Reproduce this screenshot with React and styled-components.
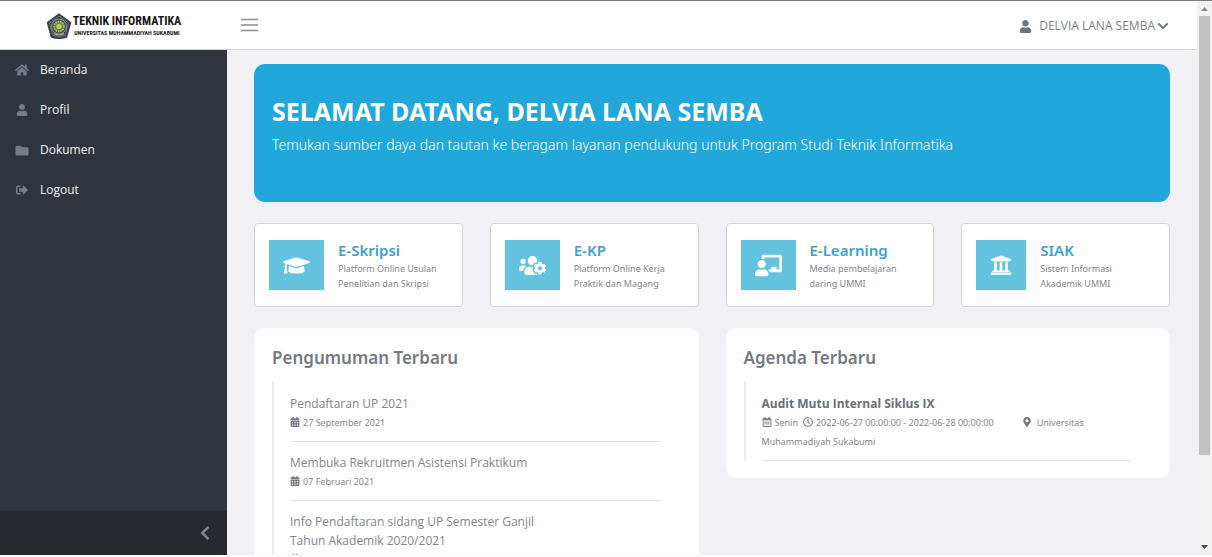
import React from "react";
import styled, { createGlobalStyle } from "styled-components";
import {
  FaHome, FaUser, FaFolder, FaSignOutAlt, FaChevronLeft, FaChevronDown,
  FaGraduationCap, FaUsersCog, FaChalkboardTeacher, FaUniversity,
  FaCalendarAlt, FaRegCalendarAlt, FaRegClock, FaMapMarkerAlt,
} from "react-icons/fa";

const GlobalStyle = createGlobalStyle`
  *, *::before, *::after { box-sizing: border-box; }
  body {
    margin: 0;
    overflow: hidden;
    background: #fff;
    color: #768192;
    font: 400 12px/18px "Noto Sans", "Open Sans", sans-serif;
  }
  h1, h2, h3, p, ul { margin: 0; padding: 0; }
  ul { list-style: none; }
  a { color: inherit; text-decoration: none; }
  button { border: 0; padding: 0; background: none; font: inherit; color: inherit; cursor: pointer; }
  svg { flex: none; }
`;

const Frame = styled.div`
  display: flex;
  height: 100vh;
  border-top: 1px solid #7b7a7f;
  border-bottom: 2px solid #fdfdfd;
`;

const Page = styled.div`
  flex: 1;
  min-width: 0;
  display: flex;
  flex-direction: column;
`;

const Header = styled.header`
  flex: none;
  display: flex;
  align-items: center;
  height: 49px;
  padding-right: 28px;
  background: #fff;
  border-bottom: 1px solid #d5d2dc;
`;

const Brand = styled.a`
  display: flex;
  align-items: center;
  justify-content: center;
  gap: 1px;
  width: 227px;
  padding-top: 2px;
  color: #17171a;
`;

const BrandText = styled.span`
  display: flex;
  flex-direction: column;
  align-items: center;
  font-family: "Roboto Condensed", "Liberation Sans Narrow", Roboto, sans-serif;
  font-weight: 700;
`;

const BrandName = styled.span`
  font-size: 12px;
  line-height: 13px;
`;

const BrandSub = styled.span`
  font-size: 6px;
  line-height: 9px;
`;

const MenuButton = styled.button`
  display: flex;
  margin-left: 14px;
  color: #8a8f96;
`;

const UserButton = styled.button`
  display: flex;
  align-items: center;
  gap: 2px;
  margin-left: auto;
  padding-top: 2px;
  font-family: "Open Sans", sans-serif;
  color: #7b8087;

  svg { color: #6c757f; }
`;

const UserName = styled.span`
  margin-left: 5px;
`;

const Columns = styled.div`
  flex: 1;
  min-height: 0;
  display: flex;
`;

const Sidebar = styled.nav`
  flex: none;
  display: flex;
  flex-direction: column;
  justify-content: space-between;
  width: 227px;
  background: #30343c;
`;

const NavLink = styled.a`
  display: flex;
  align-items: center;
  gap: 11px;
  height: 40px;
  padding: 0 0 0 15px;
  font-family: "Open Sans", sans-serif;
  color: #f1f2f3;

  svg { width: 14px; color: #737e8b; }
`;

const Minimizer = styled.button`
  display: flex;
  align-items: center;
  justify-content: flex-end;
  height: 44px;
  padding-right: 14px;
  background: #26292e;
  color: #7e8894;
`;

const Main = styled.main`
  flex: 1;
  min-width: 0;
  overflow: hidden;
  padding: 14px 27px 0;
  background: #f1f0f5;
`;

const Hero = styled.section`
  height: 138px;
  padding: 28px 18px;
  border-radius: 11px;
  background: #21a7d9;
  color: #fff;
`;

const HeroTitle = styled.h1`
  font-size: 25px;
  line-height: 38px;
  font-weight: 700;
`;

const HeroText = styled.p`
  font-size: 14px;
  line-height: 30px;
  font-weight: 300;
`;

const Services = styled.div`
  display: grid;
  grid-template-columns: repeat(4, 1fr);
  gap: 27px;
  margin: 21px 0;
`;

const ServiceCard = styled.a`
  display: flex;
  align-items: flex-start;
  gap: 14px;
  height: 84px;
  padding: 16px 14px;
  border: 1px solid #d3d3dc;
  border-radius: 4px;
  background: #fff;
`;

const ServiceIcon = styled.span`
  display: flex;
  justify-content: center;
  align-items: center;
  height: 50px;
  padding: 0 14px;
  background: #63c2de;
  color: #fff;
`;

const ServiceTitle = styled.h3`
  font-size: 15px;
  line-height: 21px;
  font-weight: 600;
  color: #3f9fcb;
`;

const ServiceText = styled.p`
  font-size: 9px;
  line-height: 15px;
  color: #82858c;
`;

const Panels = styled.div`
  display: grid;
  grid-template-columns: 1fr 1fr;
  align-items: start;
  gap: 27px;
`;

const Panel = styled.section`
  padding: 16px 18px 17px;
  border-radius: 11px;
  background: #fff;
`;

const PanelTitle = styled.h2`
  font-size: 17px;
  line-height: 28px;
  font-weight: 600;
  color: #75797f;
`;

const Timeline = styled.ul`
  margin-top: 9px;
  padding: 2px 21px 0 16px;
  border-left: 2px solid #ebedf0;
`;

const Item = styled.li`
  padding-top: 11px;
`;

const ItemTitle = styled.a`
  display: block;
  max-width: 260px;
  line-height: 19px;
  font-family: "Open Sans", sans-serif;
  font-weight: ${(p) => (p.$strong ? 700 : 400)};
  color: ${(p) => (p.$strong ? "#6b6f75" : "#80848a")};
`;

const Meta = styled.p`
  max-width: 340px;
  font-size: 9px;
  line-height: 19px;
  color: #82858c;

  svg { margin-right: 3px; vertical-align: -1px; color: #717982; }
`;

const Time = styled.span`
  display: inline-block;
  margin: 0 28px 0 5px;
`;

const Place = styled.span`
  svg { margin-right: 5px; }
`;

const Rule = styled.hr`
  height: 1px;
  margin: 9px 0 0 2px;
  border: 0;
  background: #e2e4e7;
`;

const ScrollTrack = styled.div`
  flex: none;
  display: flex;
  flex-direction: column;
  align-items: center;
  width: 15px;
  padding: 6px 0;
  background: #f1f1f2;
`;

const Arrow = styled.svg`
  width: 7px;
  height: 4px;
  fill: ${(p) => (p.$dim ? "#8a8a8c" : "#4a4a4c")};
`;

const Thumb = styled.div`
  flex: 439;
  width: 11px;
  margin-top: 5px;
  background: #c1c1c1;
`;

const Rest = styled.div`
  flex: 90;
`;

const Emblem = () => (
  <svg width="26" height="26" viewBox="0 0 26 26" aria-hidden="true">
    <path d="M13 1 L24.5 9.5 L20.5 24 Q13 26.5 5.5 24 L1.500 9.500 Z" fill="#353b52" stroke="#3b3f4d" strokeWidth="1.500" strokeLinejoin="round" />
    <path d="M13 3 L22.500 10 L19 22.500 Q13 24.500 7 22.500 L3.500 10 Z" fill="none" stroke="#7e8aa0" strokeWidth="0.800" />
    <circle cx="13" cy="13.500" r="7.500" fill="#314f75" stroke="#a79f42" strokeWidth="1" />
    <circle cx="13" cy="13.500" r="5" fill="#5f8a57" stroke="#c7c14f" strokeWidth="1.600" strokeDasharray="1.600 0.800" />
    <circle cx="13" cy="13.500" r="2.600" fill="#c3cb57" />
    <path d="M8 20.500 Q13 23.500 18 20.500" fill="none" stroke="#b8b9a0" strokeWidth="1.200" />
  </svg>
);

const MenuIcon = () => (
  <svg width="17" height="14" viewBox="0 0 17 14" stroke="currentColor" strokeWidth="1.500" aria-hidden="true">
    <path d="M0 1.500 H17 M0 7 H17 M0 12.500 H17" />
  </svg>
);

const nav = [
  ["Beranda", FaHome, 14],
  ["Profil", FaUser, 12],
  ["Dokumen", FaFolder, 13],
  ["Logout", FaSignOutAlt, 12],
];

const services = [
  ["E-Skripsi", FaGraduationCap, 27, ["Platform Online Usulan", "Penelitian dan Skripsi"]],
  ["E-KP", FaUsersCog, 27, ["Platform Online Kerja", "Praktik dan Magang"]],
  ["E-Learning", FaChalkboardTeacher, 27, ["Media pembelajaran", "daring UMMI"]],
  ["SIAK", FaUniversity, 22, ["Sistem Informasi", "Akademik UMMI"]],
];

const news = [
  ["Pendaftaran UP 2021", "27 September 2021"],
  ["Membuka Rekruitmen Asistensi Praktikum", "07 Februari 2021"],
  ["Info Pendaftaran sidang UP Semester Ganjil Tahun Akademik 2020/2021", ""],
];

export default function App() {
  return (
    <>
      <GlobalStyle />
      <Frame>
        <Page>
          <Header>
            <Brand href="#">
              <Emblem />
              <BrandText>
                <BrandName>TEKNIK INFORMATIKA</BrandName>
                <BrandSub>UNIVERSITAS MUHAMMADIYAH SUKABUMI</BrandSub>
              </BrandText>
            </Brand>
            <MenuButton aria-label="Menu"><MenuIcon /></MenuButton>
            <UserButton>
              <FaUser size={13} />
              <UserName>DELVIA LANA SEMBA</UserName>
              <FaChevronDown size={12} />
            </UserButton>
          </Header>
          <Columns>
            <Sidebar>
              <ul>
                {nav.map(([label, Icon, size]) => (
                  <li key={label}>
                    <NavLink href="#"><Icon size={size} />{label}</NavLink>
                  </li>
                ))}
              </ul>
              <Minimizer aria-label="Minimize"><FaChevronLeft size={16} /></Minimizer>
            </Sidebar>
            <Main>
              <Hero>
                <HeroTitle>SELAMAT DATANG, DELVIA LANA SEMBA</HeroTitle>
                <HeroText>Temukan sumber daya dan tautan ke beragam layanan pendukung untuk Program Studi Teknik Informatika</HeroText>
              </Hero>
              <Services>
                {services.map(([title, Icon, size, lines]) => (
                  <ServiceCard href="#" key={title}>
                    <ServiceIcon><Icon size={size} /></ServiceIcon>
                    <div>
                      <ServiceTitle>{title}</ServiceTitle>
                      <ServiceText>{lines[0]}<br />{lines[1]}</ServiceText>
                    </div>
                  </ServiceCard>
                ))}
              </Services>
              <Panels>
                <Panel>
                  <PanelTitle>Pengumuman Terbaru</PanelTitle>
                  <Timeline>
                    {news.map(([title, date]) => (
                      <Item key={title}>
                        <ItemTitle href="#">{title}</ItemTitle>
                        <Meta><FaCalendarAlt size={10} />{date}</Meta>
                        <Rule />
                      </Item>
                    ))}
                  </Timeline>
                </Panel>
                <Panel>
                  <PanelTitle>Agenda Terbaru</PanelTitle>
                  <Timeline>
                    <Item>
                      <ItemTitle href="#" $strong>Audit Mutu Internal Siklus IX</ItemTitle>
                      <Meta>
                        <FaRegCalendarAlt size={10} />
                        <span>Senin</span>
                        <Time><FaRegClock size={10} />2022-06-27 00:00:00 - 2022-06-28 00:00:00</Time>
                        <Place><FaMapMarkerAlt size={10} />Universitas Muhammadiyah Sukabumi</Place>
                      </Meta>
                      <Rule />
                    </Item>
                  </Timeline>
                </Panel>
              </Panels>
            </Main>
          </Columns>
        </Page>
        <ScrollTrack aria-hidden="true">
          <Arrow $dim viewBox="0 0 7 4"><path d="M3.500 0 L7 4 H0 Z" /></Arrow>
          <Thumb />
          <Rest />
          <Arrow viewBox="0 0 7 4"><path d="M0 0 H7 L3.500 4 Z" /></Arrow>
        </ScrollTrack>
      </Frame>
    </>
  );
}
